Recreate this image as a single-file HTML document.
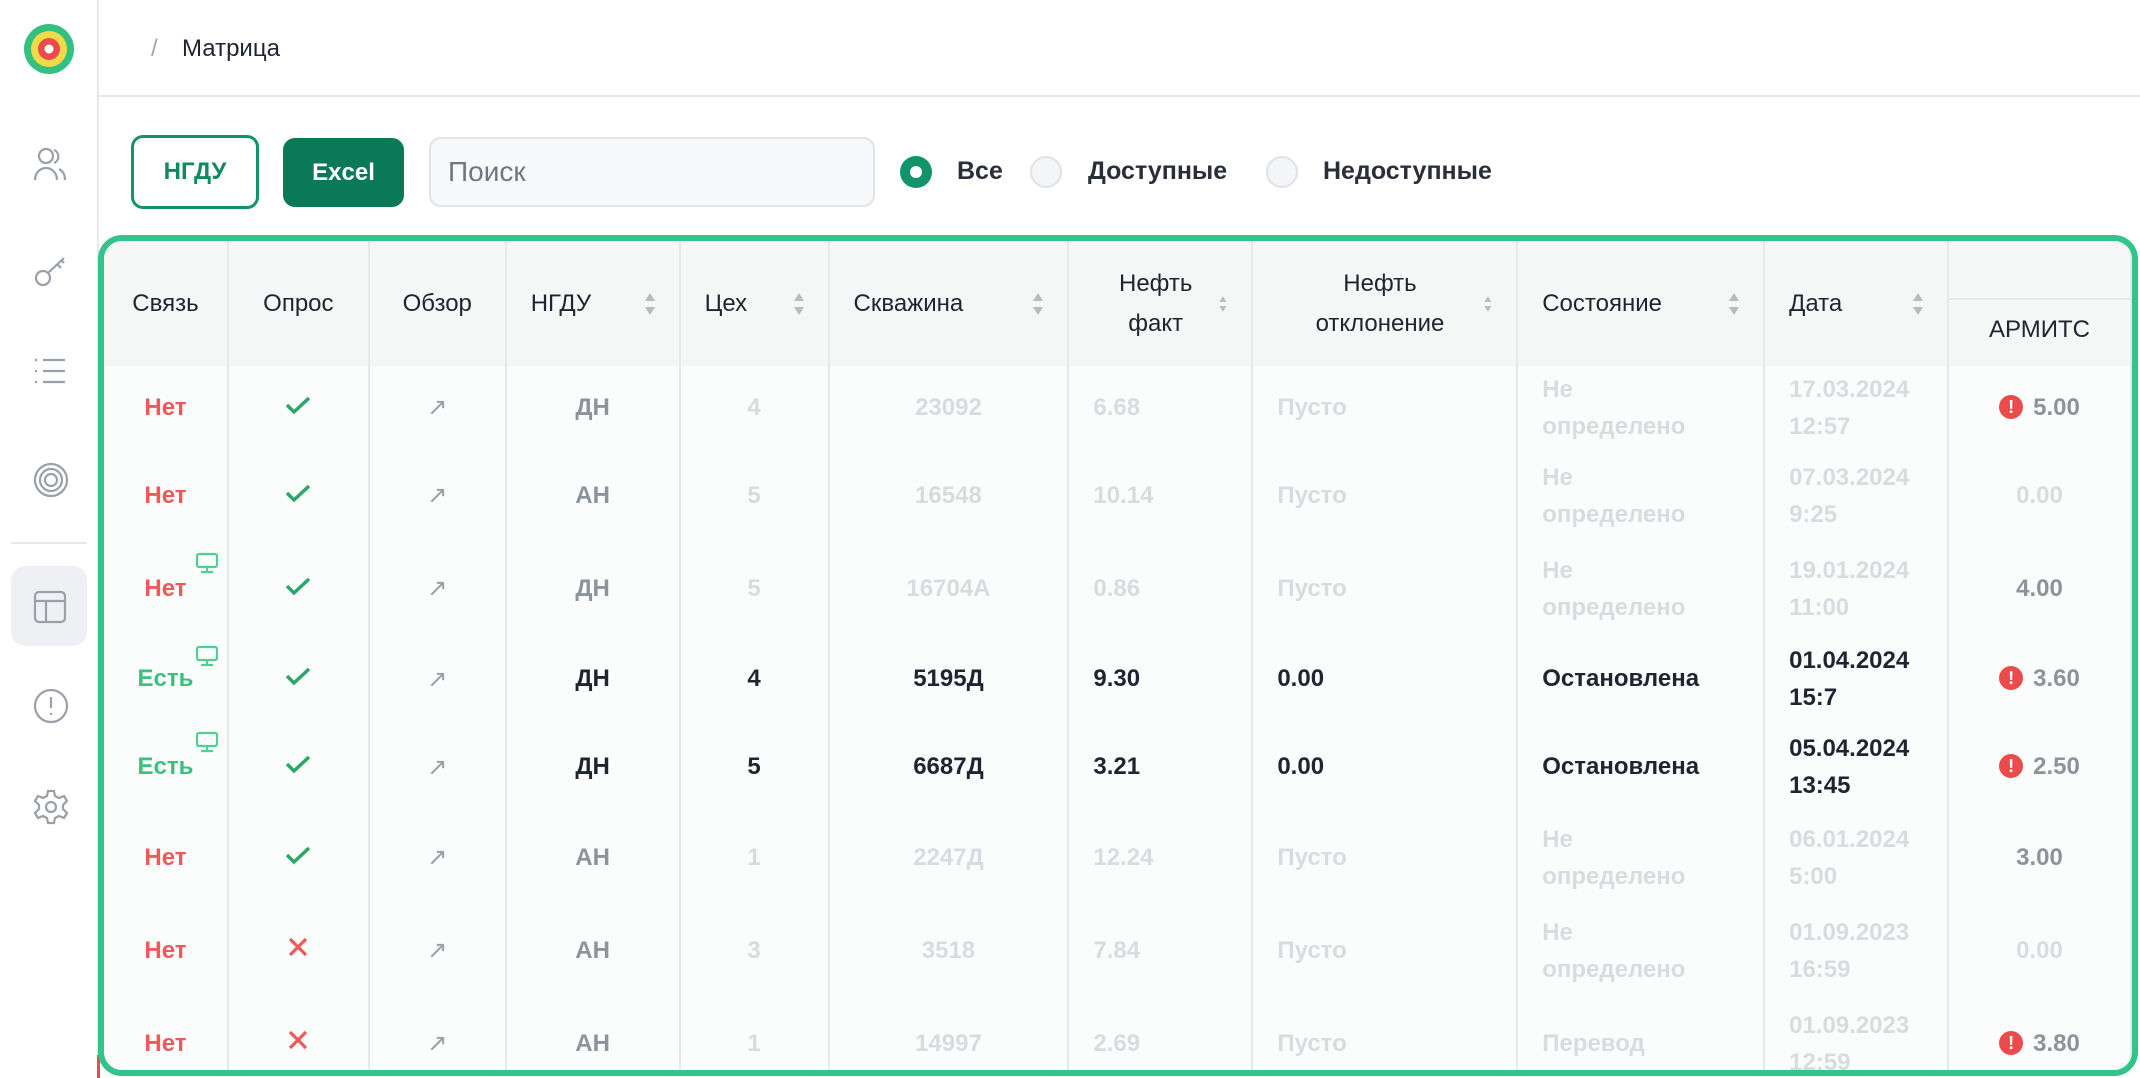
<!DOCTYPE html>
<html><head><meta charset="utf-8">
<style>
*{box-sizing:border-box;margin:0;padding:0}
body{width:2140px;height:1078px;overflow:hidden;background:#fff;font-family:"Liberation Sans",sans-serif;color:#1f2430;position:relative}
.side{position:absolute;left:0;top:0;width:99px;height:1078px;border-right:2px solid #e6e8ec}
.top{position:absolute;left:99px;top:0;right:0;height:97px;border-bottom:2px solid #e6e8ec}
.ic{position:absolute;left:33px}
.btn{position:absolute;border-radius:12px;font-weight:bold;font-size:24px;display:flex;align-items:center;justify-content:center}
.radio{position:absolute;width:32px;height:32px;border-radius:50%;border:2px solid #dfe2e6;background:#f3f5f7;top:156px}
.rl{position:absolute;top:157px;font-size:25px;font-weight:bold;color:#2a2e38}
.box{position:absolute;left:98px;top:235px;width:2040px;height:841px;border:6px solid #33c48c;border-radius:24px;overflow:hidden;background:#fbfdfc}
table{border-collapse:collapse;table-layout:fixed;position:absolute;left:0;top:0}
td,th{border-right:2px solid #e6e9ec;font-size:24px;overflow:hidden;white-space:nowrap}
th{background:#f4f7f6;height:125px;font-weight:normal;color:#1f2430;text-align:center}
td{text-align:center;color:#d8dbdf;font-weight:bold}
td.l{text-align:left;padding-left:24px}
.two{line-height:37px}
.hd{display:flex;align-items:center;justify-content:space-between;padding:0 24px;text-align:left;line-height:40px}
.so{display:inline-block;width:10px;height:22px;position:relative}
.so:before{content:"";position:absolute;left:0;top:0;border:5px solid transparent;border-bottom:8px solid #b8bcc2;border-top:0}
.so:after{content:"";position:absolute;left:0;bottom:0;border:5px solid transparent;border-top:8px solid #b8bcc2;border-bottom:0}
.net{color:#ee5a5a;font-weight:bold}
.est{color:#3cc07e;font-weight:bold}
.dk td{color:#1f2430}
.ng{color:#8d939a}
.arr{color:#9aa0a8;font-weight:normal}
.ex{display:inline-block;width:24px;height:24px;border-radius:50%;background:#ea4b4b;color:#fff;font-size:18px;line-height:24px;text-align:center;vertical-align:2px;margin-right:10px}
.mon{position:absolute;right:8px;top:-30px}
</style></head><body>
<div class="side">
  <svg style="position:absolute;left:23px;top:23px" width="52" height="52" viewBox="0 0 52 52"><circle cx="26" cy="26" r="25" fill="#34c07f"/><circle cx="26" cy="26" r="18" fill="#f2d94a"/><circle cx="26" cy="26" r="11" fill="#ea4b4b"/><circle cx="26" cy="26" r="4.5" fill="#fff"/></svg>
  <svg class="ic" style="top:146px" width="34" height="36" viewBox="0 0 34 36" fill="none" stroke="#9aa0a8" stroke-width="2.2"><circle cx="13" cy="10" r="7"/><path d="M2 34c0-7 5-12 11-12s11 5 11 12"/><path d="M21 4a7 7 0 0 1 0 13M26 23c4 2 6 6 6 11"/></svg>
  <svg class="ic" style="top:252px" width="34" height="36" viewBox="0 0 34 36" fill="none" stroke="#9aa0a8" stroke-width="2.2"><circle cx="10" cy="26" r="7"/><path d="M15 21L31 6M24 12l4 4M28 8l3 3"/></svg>
  <svg class="ic" style="top:356px" width="34" height="30" viewBox="0 0 34 30" fill="none" stroke="#9aa0a8" stroke-width="2.2"><path d="M10 4h22M10 15h22M10 26h22M2 4h2M2 15h2M2 26h2"/></svg>
  <svg class="ic" style="top:462px" width="36" height="36" viewBox="0 0 36 36" fill="none" stroke="#9aa0a8" stroke-width="2.2"><circle cx="18" cy="18" r="16"/><circle cx="18" cy="18" r="11"/><circle cx="18" cy="18" r="6"/></svg>
  <div style="position:absolute;left:11px;top:542px;width:76px;height:2px;background:#e6e8ec"></div>
  <div style="position:absolute;left:11px;top:566px;width:76px;height:80px;border-radius:14px;background:#eef0f3"></div>
  <svg class="ic" style="top:590px" width="34" height="34" viewBox="0 0 34 34" fill="none" stroke="#9aa0a8" stroke-width="2.2"><rect x="2" y="2" width="30" height="30" rx="4"/><path d="M2 11h30M13 11v21"/></svg>
  <svg class="ic" style="top:688px" width="36" height="36" viewBox="0 0 36 36" fill="none" stroke="#9aa0a8" stroke-width="2.2"><circle cx="18" cy="18" r="16"/><path d="M18 9v11M18 25v2"/></svg>
  <svg class="ic" style="top:789px" width="36" height="36" viewBox="0 0 36 36" fill="none" stroke="#9aa0a8" stroke-width="2.2"><circle cx="18" cy="18" r="5"/><path d="M15 2h6l1 5 4 2 5-2 3 5-4 4v4l4 4-3 5-5-2-4 2-1 5h-6l-1-5-4-2-5 2-3-5 4-4v-4l-4-4 3-5 5 2 4-2z"/></svg>
</div>
<div class="top">
  <span style="position:absolute;left:52px;top:35px;font-size:24px;color:#a0a6ae">/</span>
  <span style="position:absolute;left:83px;top:35px;font-size:24px;color:#1f2430">Матрица</span>
</div>
<div class="btn" style="left:131px;top:135px;width:128px;height:74px;border:3px solid #12946a;color:#0e8a5f">НГДУ</div>
<div class="btn" style="left:283px;top:138px;width:121px;height:69px;background:#0a7a56;color:#fff">Excel</div>
<div style="position:absolute;left:429px;top:137px;width:446px;height:70px;border:2px solid #dfe2e6;border-radius:12px;background:#f8f9fb;font-size:28px;color:#70767e;padding:17px 0 0 17px">Поиск</div>
<div class="radio" style="left:900px;background:#fff;border:none"><svg width="32" height="32"><circle cx="16" cy="16" r="16" fill="#12946a"/><circle cx="16" cy="16" r="6" fill="#fff"/></svg></div>
<div class="rl" style="left:957px">Все</div>
<div class="radio" style="left:1030px"></div>
<div class="rl" style="left:1088px">Доступные</div>
<div class="radio" style="left:1266px"></div>
<div class="rl" style="left:1323px">Недоступные</div>
<div style="position:absolute;left:97px;top:1055px;width:3px;height:23px;background:#ea4b4b"></div>

<div class="box">
<table>
<colgroup><col style="width:124px"><col style="width:141px"><col style="width:137px"><col style="width:174px"><col style="width:149px"><col style="width:240px"><col style="width:184px"><col style="width:265px"><col style="width:247px"><col style="width:184px"><col style="width:183px"></colgroup>
<tr>
<th>Связь</th><th>Опрос</th><th>Обзор</th>
<th><div class="hd"><span>НГДУ</span><span class="so"></span></div></th>
<th><div class="hd"><span>Цех</span><span class="so"></span></div></th>
<th><div class="hd"><span>Скважина</span><span class="so"></span></div></th>
<th><div class="hd"><span style="text-align:center;width:100%">Нефть<br>факт</span><span class="so" style="transform:scale(.7)"></span></div></th>
<th><div class="hd"><span style="text-align:center;width:100%">Нефть<br>отклонение</span><span class="so" style="transform:scale(.7)"></span></div></th>
<th><div class="hd"><span>Состояние</span><span class="so"></span></div></th>
<th><div class="hd"><span>Дата</span><span class="so"></span></div></th>
<th style="padding:0;vertical-align:top"><div style="height:59px;border-bottom:2px solid #e6e9ec"></div><div style="line-height:60px">АРМИТС</div></th>
</tr>
<tbody>
<tr style="height:83px"><td class="net">Нет</td><td><svg width="26" height="20"><path d="M2 10l7 7L24 3" fill="none" stroke="#2aa86a" stroke-width="3.5"/></svg></td><td class="arr">↗</td><td class="ng">ДН</td><td>4</td><td>23092</td><td class="l">6.68</td><td class="l">Пусто</td><td class="l two">Не<br>определено</td><td class="l two">17.03.2024<br>12:57</td><td class="ng"><span class="ex">!</span>5.00</td></tr>
<tr style="height:93px"><td class="net">Нет</td><td><svg width="26" height="20"><path d="M2 10l7 7L24 3" fill="none" stroke="#2aa86a" stroke-width="3.5"/></svg></td><td class="arr">↗</td><td class="ng">АН</td><td>5</td><td>16548</td><td class="l">10.14</td><td class="l">Пусто</td><td class="l two">Не<br>определено</td><td class="l two">07.03.2024<br>9:25</td><td>0.00</td></tr>
<tr style="height:93px"><td class="net" style="position:relative"><svg class="mon" style="top:10px" width="24" height="22" viewBox="0 0 24 22" fill="none" stroke="#4fcf93" stroke-width="2.2"><rect x="2" y="2" width="20" height="13" rx="2"/><path d="M12 15v4M6 20h12"/></svg>Нет</td><td><svg width="26" height="20"><path d="M2 10l7 7L24 3" fill="none" stroke="#2aa86a" stroke-width="3.5"/></svg></td><td class="arr">↗</td><td class="ng">ДН</td><td>5</td><td>16704А</td><td class="l">0.86</td><td class="l">Пусто</td><td class="l two">Не<br>определено</td><td class="l two">19.01.2024<br>11:00</td><td class="ng">4.00</td></tr>
<tr class="dk" style="height:88px"><td class="est" style="position:relative;color:#3cc07e"><svg class="mon" style="top:10px" width="24" height="22" viewBox="0 0 24 22" fill="none" stroke="#4fcf93" stroke-width="2.2"><rect x="2" y="2" width="20" height="13" rx="2"/><path d="M12 15v4M6 20h12"/></svg>Есть</td><td><svg width="26" height="20"><path d="M2 10l7 7L24 3" fill="none" stroke="#2aa86a" stroke-width="3.5"/></svg></td><td class="arr" style="color:#9aa0a8">↗</td><td>ДН</td><td>4</td><td>5195Д</td><td class="l">9.30</td><td class="l">0.00</td><td class="l">Остановлена</td><td class="l two">01.04.2024<br>15:7</td><td class="ng" style="color:#8d939a"><span class="ex">!</span>3.60</td></tr>
<tr class="dk" style="height:88px"><td class="est" style="position:relative;color:#3cc07e"><svg class="mon" style="top:8px" width="24" height="22" viewBox="0 0 24 22" fill="none" stroke="#4fcf93" stroke-width="2.2"><rect x="2" y="2" width="20" height="13" rx="2"/><path d="M12 15v4M6 20h12"/></svg>Есть</td><td><svg width="26" height="20"><path d="M2 10l7 7L24 3" fill="none" stroke="#2aa86a" stroke-width="3.5"/></svg></td><td class="arr" style="color:#9aa0a8">↗</td><td>ДН</td><td>5</td><td>6687Д</td><td class="l">3.21</td><td class="l">0.00</td><td class="l">Остановлена</td><td class="l two">05.04.2024<br>13:45</td><td class="ng" style="color:#8d939a"><span class="ex">!</span>2.50</td></tr>
<tr style="height:93px"><td class="net">Нет</td><td><svg width="26" height="20"><path d="M2 10l7 7L24 3" fill="none" stroke="#2aa86a" stroke-width="3.5"/></svg></td><td class="arr">↗</td><td class="ng">АН</td><td>1</td><td>2247Д</td><td class="l">12.24</td><td class="l">Пусто</td><td class="l two">Не<br>определено</td><td class="l two">06.01.2024<br>5:00</td><td class="ng">3.00</td></tr>
<tr style="height:93px"><td class="net">Нет</td><td><svg width="22" height="22"><path d="M3 3l16 16M19 3L3 19" stroke="#ee5a5a" stroke-width="3.2"/></svg></td><td class="arr">↗</td><td class="ng">АН</td><td>3</td><td>3518</td><td class="l">7.84</td><td class="l">Пусто</td><td class="l two">Не<br>определено</td><td class="l two">01.09.2023<br>16:59</td><td>0.00</td></tr>
<tr style="height:93px"><td class="net">Нет</td><td><svg width="22" height="22"><path d="M3 3l16 16M19 3L3 19" stroke="#ee5a5a" stroke-width="3.2"/></svg></td><td class="arr">↗</td><td class="ng">АН</td><td>1</td><td>14997</td><td class="l">2.69</td><td class="l">Пусто</td><td class="l">Перевод</td><td class="l two">01.09.2023<br>12:59</td><td class="ng"><span class="ex">!</span>3.80</td></tr>
</tbody>
</table>
</div>
</body></html>
